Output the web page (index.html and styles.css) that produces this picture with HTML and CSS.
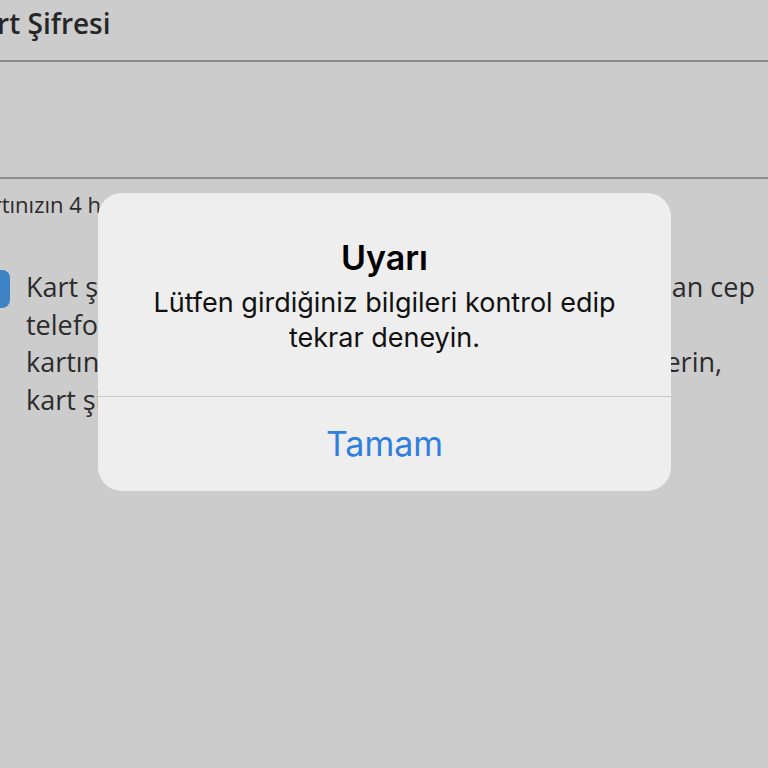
FILE: index.html
```html
<!DOCTYPE html>
<html lang="tr">
<head>
<meta charset="utf-8">
<link rel="stylesheet" href="styles.css">
</head>
<body>
<div class="page">
  <div class="header"><span class="title">Kart Şifresi</span></div>
  <div class="field"></div>
  <div class="hint">Kartınızın 4 haneli şifresini giriniz</div>
  <div class="notice">
    <div class="mark"></div>
    <div class="lines">
      <div class="line"><span>Kart şifrenizi bankamızda kayıtlı olan</span><span class="end">an cep</span></div>
      <div class="line"><span>telefonunuza gelen tek kullanımlık kodla</span></div>
      <div class="line"><span>kartınızı ve kimlik bilgilerinizi giriniz</span><span class="end e3">erin,</span></div>
      <div class="line"><span>kart şifrenizi belirleyin.</span></div>
    </div>
  </div>
</div>
<div class="overlay">
  <div class="alert">
    <div class="alert-body">
      <div class="alert-title">Uyarı</div>
      <div class="alert-msg">Lütfen girdiğiniz bilgileri kontrol edip<br>tekrar deneyin.</div>
    </div>
    <div class="alert-btn">Tamam</div>
  </div>
</div>
</body>
</html>
```
FILE: styles.css
```css
* { box-sizing: border-box; }
html, body { margin: 0; padding: 0; }
body {
  width: 768px;
  height: 768px;
  overflow: hidden;
  background: #cccccc;
  font-family: "Open Sans", "Noto Sans", sans-serif;
  color: #2b2b2b;
}
.page { width: 768px; }
.header {
  height: 62px;
  border-bottom: 2px solid #8c8c8c;
  padding-top: 2px;
}
.title {
  display: block;
  margin-left: -37px;
  font-size: 28px;
  font-weight: 600;
  line-height: 42px;
  color: #262626;
}
.field {
  height: 117px;
  border-bottom: 2px solid #8c8c8c;
}
.hint {
  margin-left: -33px;
  margin-top: 10px;
  font-size: 22px;
  line-height: 30px;
  white-space: nowrap;
}
.notice {
  display: flex;
  gap: 16px;
  margin-top: 49px;
}
.mark {
  width: 10px;
  height: 38px;
  margin-top: 2px;
  background: #3d82c4;
  border-radius: 0 8px 8px 0;
  flex: none;
}
.lines { flex: 1; padding-right: 13px; }
.line {
  display: flex;
  justify-content: space-between;
  font-size: 27px;
  line-height: 37.5px;
  white-space: nowrap;
}
.end.e3 { margin-right: 33px; }
.overlay {
  position: absolute;
  left: 0;
  top: 0;
  width: 768px;
  height: 768px;
}
.alert {
  position: absolute;
  left: 98px;
  top: 193px;
  width: 573px;
  height: 298px;
  background: #eeeeee;
  border-radius: 24px;
  display: flex;
  flex-direction: column;
  font-family: "Inter", "Liberation Sans", sans-serif;
  text-align: center;
}
.alert-body {
  height: 204px;
  border-bottom: 1px solid #c6c6c6;
  padding-top: 45px;
}
.alert-title {
  font-size: 34px;
  font-weight: 600;
  line-height: 40px;
  color: #000;
}
.alert-msg {
  margin-top: 7px;
  font-size: 27px;
  line-height: 35px;
  color: #111;
}
.alert-btn {
  flex: 1;
  display: flex;
  align-items: center;
  justify-content: center;
  font-size: 34px;
  color: #2e7fdf;
  padding-bottom: 2px;
}
```
